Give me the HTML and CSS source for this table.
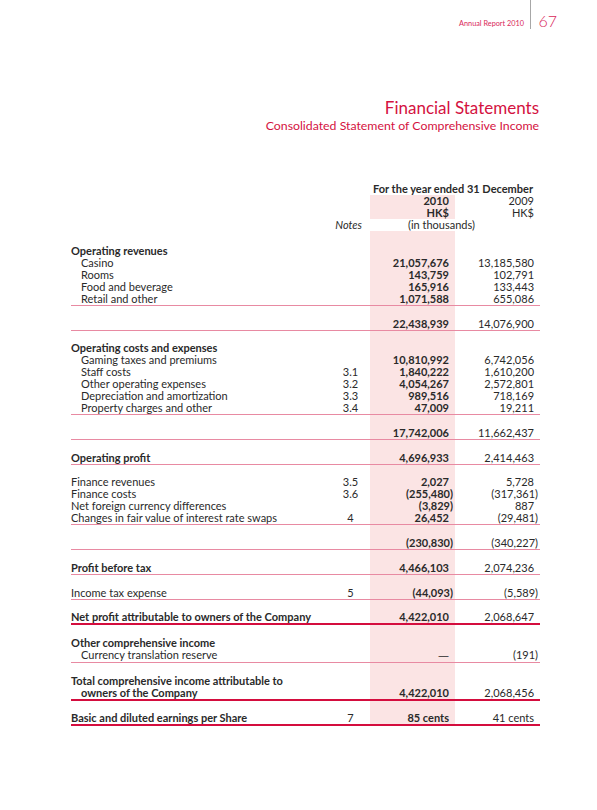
FILE: index.html
```html
<!DOCTYPE html>
<html lang="en">
<head>
<meta charset="UTF-8">
<title>Financial Statements</title>
<link rel="stylesheet" href="styles.css">
</head>
<body>
<div class="top">
  <span class="report">Annual Report 2010</span>
  <span class="rule"></span>
  <span class="pageno">67</span>
</div>

<div class="page">
  <div class="titles">
    <h1>Financial Statements</h1>
    <h2>Consolidated Statement of Comprehensive Income</h2>
  </div>

  <table class="fs">
    <colgroup>
      <col class="c-label"><col class="c-note"><col class="c-cur"><col class="c-prev">
    </colgroup>
    <tr class="hd">
      <td></td><td></td><td colspan="2" class="period">For the year ended 31 December</td>
    </tr>
    <tr class="hd"><td></td><td></td><td class="cur b">2010</td><td class="prev">2009</td></tr>
    <tr class="hd"><td></td><td></td><td class="cur b">HK$</td><td class="prev">HK$</td></tr>
    <tr class="hd"><td></td><td class="notes">Notes</td><td colspan="2" class="thous">(in thousands)</td></tr>
    <tr class="gap first"><td></td><td></td><td class="cur"></td><td></td></tr>

    <tr><td class="b">Operating revenues</td><td></td><td class="cur"></td><td></td></tr>
    <tr><td class="in">Casino</td><td></td><td class="cur b">21,057,676</td><td class="prev">13,185,580</td></tr>
    <tr><td class="in">Rooms</td><td></td><td class="cur b">143,759</td><td class="prev">102,791</td></tr>
    <tr><td class="in">Food and beverage</td><td></td><td class="cur b">165,916</td><td class="prev">133,443</td></tr>
    <tr class="line"><td class="in">Retail and other</td><td></td><td class="cur b">1,071,588</td><td class="prev">655,086</td></tr>
    <tr class="gap"><td></td><td></td><td class="cur"></td><td></td></tr>
    <tr class="line"><td></td><td></td><td class="cur b">22,438,939</td><td class="prev">14,076,900</td></tr>
    <tr class="gap"><td></td><td></td><td class="cur"></td><td></td></tr>

    <tr><td class="b">Operating costs and expenses</td><td></td><td class="cur"></td><td></td></tr>
    <tr><td class="in">Gaming taxes and premiums</td><td></td><td class="cur b">10,810,992</td><td class="prev">6,742,056</td></tr>
    <tr><td class="in">Staff costs</td><td class="note">3.1</td><td class="cur b">1,840,222</td><td class="prev">1,610,200</td></tr>
    <tr><td class="in">Other operating expenses</td><td class="note">3.2</td><td class="cur b">4,054,267</td><td class="prev">2,572,801</td></tr>
    <tr><td class="in">Depreciation and amortization</td><td class="note">3.3</td><td class="cur b">989,516</td><td class="prev">718,169</td></tr>
    <tr class="line"><td class="in">Property charges and other</td><td class="note">3.4</td><td class="cur b">47,009</td><td class="prev">19,211</td></tr>
    <tr class="gap"><td></td><td></td><td class="cur"></td><td></td></tr>
    <tr class="line"><td></td><td></td><td class="cur b">17,742,006</td><td class="prev">11,662,437</td></tr>
    <tr class="gap"><td></td><td></td><td class="cur"></td><td></td></tr>

    <tr class="line"><td class="b">Operating profit</td><td></td><td class="cur b">4,696,933</td><td class="prev">2,414,463</td></tr>
    <tr class="gap"><td></td><td></td><td class="cur"></td><td></td></tr>

    <tr><td>Finance revenues</td><td class="note">3.5</td><td class="cur b">2,027</td><td class="prev">5,728</td></tr>
    <tr><td>Finance costs</td><td class="note">3.6</td><td class="cur b neg">(255,480)</td><td class="prev neg">(317,361)</td></tr>
    <tr><td>Net foreign currency differences</td><td></td><td class="cur b neg">(3,829)</td><td class="prev">887</td></tr>
    <tr class="line"><td>Changes in fair value of interest rate swaps</td><td class="note">4</td><td class="cur b">26,452</td><td class="prev neg">(29,481)</td></tr>
    <tr class="gap"><td></td><td></td><td class="cur"></td><td></td></tr>
    <tr class="line"><td></td><td></td><td class="cur b neg">(230,830)</td><td class="prev neg">(340,227)</td></tr>
    <tr class="gap"><td></td><td></td><td class="cur"></td><td></td></tr>

    <tr class="line"><td class="b">Profit before tax</td><td></td><td class="cur b">4,466,103</td><td class="prev">2,074,236</td></tr>
    <tr class="gap"><td></td><td></td><td class="cur"></td><td></td></tr>
    <tr class="line"><td>Income tax expense</td><td class="note">5</td><td class="cur b neg">(44,093)</td><td class="prev neg">(5,589)</td></tr>
    <tr class="gap"><td></td><td></td><td class="cur"></td><td></td></tr>
    <tr class="thick"><td class="b">Net profit attributable to owners of the Company</td><td></td><td class="cur b">4,422,010</td><td class="prev">2,068,647</td></tr>
    <tr class="gap"><td></td><td></td><td class="cur"></td><td></td></tr>

    <tr><td class="b">Other comprehensive income</td><td></td><td class="cur"></td><td></td></tr>
    <tr class="line"><td class="in">Currency translation reserve</td><td></td><td class="cur b"><span class="dash">&mdash;</span></td><td class="prev neg">(191)</td></tr>
    <tr class="gap"><td></td><td></td><td class="cur"></td><td></td></tr>

    <tr><td class="b">Total comprehensive income attributable to</td><td></td><td class="cur"></td><td></td></tr>
    <tr class="thick"><td class="b in">owners of the Company</td><td></td><td class="cur b">4,422,010</td><td class="prev">2,068,456</td></tr>
    <tr class="gap"><td></td><td></td><td class="cur"></td><td></td></tr>
    <tr class="thick"><td class="b">Basic and diluted earnings per Share</td><td class="note">7</td><td class="cur b">85 cents</td><td class="prev">41 cents</td></tr>
  </table>
</div>
</body>
</html>
```

FILE: styles.css
```css
body{
    margin: 0;
    background: #fff;
    color: #2a2a2a;
    font-family: "Lato", "Liberation Sans", sans-serif;
}

/* running header */
.top{
    display: flex;
    justify-content: flex-end;
    align-items: flex-end;
    height: 29px;
    padding-right: 40px;
}
.report{
    font-size: 7.3px;
    color: #d9285a;
    margin-bottom: 1px;
    margin-right: 6px;
}
.rule{
    align-self: stretch;
    width: 1.5px;
    background: #a7a7a7;
    margin-right: 7px;
}
.pageno{
    font-size: 16px;
    font-weight: 300;
    line-height: 17px;
    color: #d9285a;
}

.page{
    padding: 0 57px 0 71px;
}

.titles{
    text-align: right;
    margin-top: 69px;
    margin-right: 1px;
}
h1{
    margin: 0;
    font-size: 17px;
    font-weight: 400;
    line-height: 20px;
    color: #d4123f;
}
h2{
    margin: 0;
    font-size: 12.3px;
    font-weight: 400;
    line-height: 16px;
    color: #d4123f;
}

/* statement table */
table.fs{
    margin-top: 49px;
    width: 469px;
    border-collapse: collapse;
    table-layout: fixed;
    font-size: 11px;
}
col.c-label{ width: 259px; }
col.c-note{ width: 40px; }
col.c-cur{ width: 85px; }
col.c-prev{ width: 85px; }

.fs td{
    padding: 0;
    height: 12px;
    line-height: 12px;
    white-space: nowrap;
    vertical-align: middle;
}
.fs .b{ font-weight: 700; }
.fs .in{ padding-left: 10px; }
.fs .note{ text-align: center; padding-left: 1px; }
.fs .cur{
    background: #fbe4e4;
    text-align: right;
    padding-right: 6px;
}
.fs .prev{
    text-align: right;
    padding-right: 6px;
}
.fs .neg{ padding-right: 2px; }
.fs .dash{
    font-family: "DejaVu Sans", sans-serif;
    font-weight: 400;
}

.fs .period{
    font-weight: 700;
    text-align: left;
    padding-left: 3px;
}
.fs .notes{
    font-style: italic;
    text-align: right;
    padding-right: 8px;
}
.fs .thous{
    text-align: left;
    padding-left: 38px;
}
.fs .gap td{ height: 11.7px; }
.fs .first td{ height: 14px; }

.fs .line td{ border-bottom: 1px solid #e88aa2; }
.fs .thick td{ border-bottom: 2px solid #d40d3e; }
```
